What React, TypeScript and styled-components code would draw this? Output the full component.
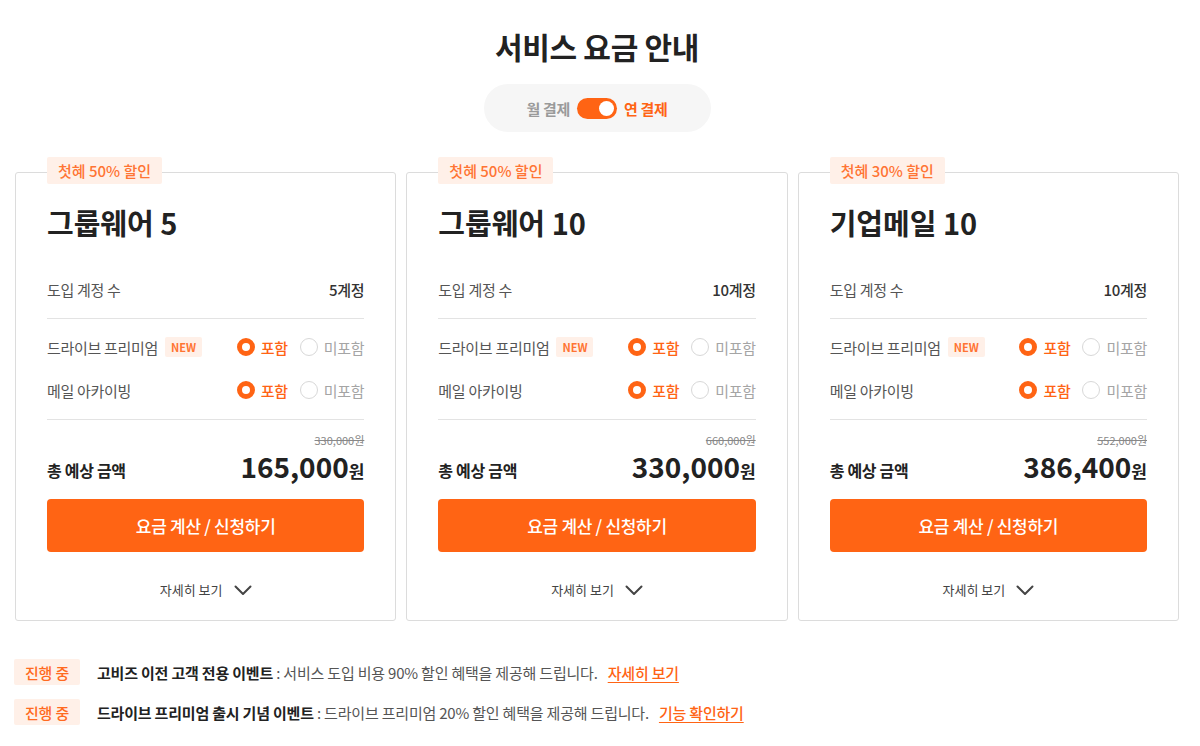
import React, { useState } from 'react';
import styled, { createGlobalStyle } from 'styled-components';

const ORANGE = '#ff6414';

const GlobalStyle = createGlobalStyle`
  html, body {
    margin: 0;
    padding: 0;
    background: #fff;
    font-family: "Noto Sans CJK KR", "Noto Sans", sans-serif;
    color: #222;
    letter-spacing: -0.3px;
  }
  * { box-sizing: border-box; }
`;

const Page = styled.div`
  width: 1200px;
  padding: 26px 21px 0 15px;
`;

const Heading = styled.h1`
  margin: 0;
  text-align: center;
  font-size: 30px;
  line-height: 40px;
  font-weight: 700;
  color: #222;
`;

const ToggleWrap = styled.div`
  display: flex;
  justify-content: center;
  margin-top: 18px;
`;

const TogglePill = styled.div`
  width: 227px;
  height: 48px;
  border-radius: 24px;
  background: #f6f6f6;
  display: flex;
  align-items: center;
  justify-content: center;
  gap: 7px;
`;

const ToggleLabel = styled.span<{ $active?: boolean }>`
  font-size: 15px;
  font-weight: 700;
  color: ${(p) => (p.$active ? ORANGE : '#9a9a9a')};
`;

const Switch = styled.button<{ $on: boolean }>`
  width: 40px;
  height: 21px;
  border: none;
  border-radius: 11px;
  background: ${(p) => (p.$on ? ORANGE : '#ccc')};
  padding: 0 3px;
  display: flex;
  align-items: center;
  justify-content: ${(p) => (p.$on ? 'flex-end' : 'flex-start')};
  cursor: pointer;
`;

const Knob = styled.span`
  width: 15px;
  height: 15px;
  border-radius: 50%;
  background: #fff;
`;

const CardGrid = styled.div`
  display: grid;
  grid-template-columns: repeat(3, 1fr);
  gap: 10px;
  margin-top: 40px;
`;

const Card = styled.div`
  position: relative;
  border: 1px solid #dcdcdc;
  border-radius: 3px;
  padding: 31px 31px 20px;
`;

const DiscountBadge = styled.span`
  position: absolute;
  top: -16px;
  left: 31px;
  height: 27px;
  padding: 0 11px;
  display: flex;
  align-items: center;
  background: #fff0e8;
  color: #ff7433;
  font-size: 15px;
  font-weight: 500;
  letter-spacing: 0;
  border-radius: 2px;
`;

const CardTitle = styled.h2`
  margin: 0;
  font-size: 29px;
  line-height: 36px;
  font-weight: 700;
  letter-spacing: 0;
  color: #222;
`;

const Row = styled.div`
  display: flex;
  align-items: center;
  justify-content: space-between;
  height: 20px;
  font-size: 15px;
`;

const CountRow = styled(Row)`
  margin-top: 39px;
`;

const Label = styled.span`
  color: #555;
  display: flex;
  align-items: center;
  gap: 7px;
`;

const Value = styled.span`
  color: #333;
  font-weight: 500;
`;

const Divider = styled.hr<{ $flush?: boolean }>`
  border: none;
  border-top: 1px solid #e3e3e3;
  margin: ${(p) => (p.$flush ? '0' : '19px 0 0')};
`;

const Options = styled.div`
  padding: 18px 0 19px;
  display: flex;
  flex-direction: column;
  gap: 23px;
`;

const NewTag = styled.span`
  background: #fff0e8;
  color: #ff7433;
  font-size: 11px;
  line-height: 14px;
  font-weight: 700;
  padding: 3px 6px;
  border-radius: 2px;
  letter-spacing: 0;
`;

const RadioGroup = styled.div`
  display: flex;
  align-items: center;
`;

const RadioItem = styled.label<{ $checked: boolean }>`
  display: flex;
  align-items: center;
  gap: 6px;
  color: ${(p) => (p.$checked ? ORANGE : '#a5a5a5')};
  font-weight: ${(p) => (p.$checked ? 500 : 400)};
  cursor: pointer;
  & + & {
    margin-left: 12px;
  }
`;

const RadioDot = styled.span<{ $checked: boolean }>`
  width: 18px;
  height: 18px;
  border-radius: 50%;
  border: ${(p) => (p.$checked ? `5px solid ${ORANGE}` : '1px solid #d8d8d8')};
  background: #fff;
`;

const PriceRow = styled.div`
  display: flex;
  justify-content: space-between;
  align-items: flex-end;
  padding-top: 14px;
`;

const TotalLabel = styled.span`
  font-size: 16px;
  line-height: 22px;
  font-weight: 700;
  color: #222;
  margin-bottom: 1px;
`;

const PriceBox = styled.div`
  display: flex;
  flex-direction: column;
  align-items: flex-end;
`;

const OldPrice = styled.span`
  font-size: 11px;
  line-height: 13px;
  height: 13px;
  color: #888;
  text-decoration: line-through;
  letter-spacing: 0;
`;

const Price = styled.span`
  display: flex;
  align-items: baseline;
  height: 32px;
  margin-top: 3px;
  font-size: 28px;
  line-height: 32px;
  font-weight: 700;
  color: #222;
  letter-spacing: 0;
  small {
    font-size: 17px;
    line-height: 1;
    font-weight: 700;
  }
`;

const ApplyButton = styled.button`
  width: 100%;
  height: 53px;
  margin-top: 17px;
  border: none;
  border-radius: 4px;
  background: ${ORANGE};
  color: #fff;
  font-family: inherit;
  font-size: 17px;
  font-weight: 500;
  letter-spacing: -0.3px;
  cursor: pointer;
`;

const MoreLink = styled.div`
  margin-top: 28px;
  display: flex;
  justify-content: center;
  align-items: center;
  gap: 11px;
  font-size: 13px;
  line-height: 20px;
  letter-spacing: 0;
  color: #444;
`;

const Events = styled.div`
  margin-top: 38px;
  display: flex;
  flex-direction: column;
  gap: 14px;
  margin-left: -1px;
`;

const EventRow = styled.div`
  display: flex;
  align-items: center;
  font-size: 15px;
  letter-spacing: -0.2px;
`;

const StatusBadge = styled.span`
  width: 66px;
  height: 26px;
  display: flex;
  align-items: center;
  justify-content: center;
  background: #fff0e8;
  color: #ff6a20;
  font-size: 15px;
  font-weight: 500;
  border-radius: 2px;
  margin-right: 17px;
`;

const EventName = styled.strong`
  font-weight: 700;
  color: #222;
`;

const EventDesc = styled.span`
  color: #555;
`;

const EventLink = styled.a`
  margin-left: 10px;
  color: ${ORANGE};
  font-weight: 500;
  text-decoration: underline;
  text-underline-offset: 3px;
  cursor: pointer;
`;

type Plan = {
  badge: string;
  name: string;
  seats: string;
  oldPrice: string;
  price: string;
};

const plans: Plan[] = [
  { badge: '첫혜 50% 할인', name: '그룹웨어 5', seats: '5계정', oldPrice: '330,000원', price: '165,000' },
  { badge: '첫혜 50% 할인', name: '그룹웨어 10', seats: '10계정', oldPrice: '660,000원', price: '330,000' },
  { badge: '첫혜 30% 할인', name: '기업메일 10', seats: '10계정', oldPrice: '552,000원', price: '386,400' },
];

function Chevron() {
  return (
    <svg width="18" height="11" viewBox="0 0 18 11" fill="none">
      <path d="M1.5 1.5L9 9l7.5-7.5" stroke="#444" strokeWidth="2" strokeLinecap="round" strokeLinejoin="round" />
    </svg>
  );
}

function Radio({ label, checked, onClick }: { label: string; checked: boolean; onClick: () => void }) {
  return (
    <RadioItem $checked={checked} onClick={onClick}>
      <RadioDot $checked={checked} />
      {label}
    </RadioItem>
  );
}

function OptionRow({ label, isNew }: { label: string; isNew?: boolean }) {
  const [included, setIncluded] = useState(true);
  return (
    <Row>
      <Label>
        {label}
        {isNew && <NewTag>NEW</NewTag>}
      </Label>
      <RadioGroup>
        <Radio label="포함" checked={included} onClick={() => setIncluded(true)} />
        <Radio label="미포함" checked={!included} onClick={() => setIncluded(false)} />
      </RadioGroup>
    </Row>
  );
}

function PlanCard({ plan }: { plan: Plan }) {
  return (
    <Card>
      <DiscountBadge>{plan.badge}</DiscountBadge>
      <CardTitle>{plan.name}</CardTitle>
      <CountRow>
        <Label>도입 계정 수</Label>
        <Value>{plan.seats}</Value>
      </CountRow>
      <Divider />
      <Options>
        <OptionRow label="드라이브 프리미엄" isNew />
        <OptionRow label="메일 아카이빙" />
      </Options>
      <Divider $flush />
      <PriceRow>
        <TotalLabel>총 예상 금액</TotalLabel>
        <PriceBox>
          <OldPrice>{plan.oldPrice}</OldPrice>
          <Price>
            {plan.price}
            <small>원</small>
          </Price>
        </PriceBox>
      </PriceRow>
      <ApplyButton>요금 계산 / 신청하기</ApplyButton>
      <MoreLink>
        자세히 보기
        <Chevron />
      </MoreLink>
    </Card>
  );
}

export default function App() {
  const [yearly, setYearly] = useState(true);
  return (
    <Page>
      <GlobalStyle />
      <Heading>서비스 요금 안내</Heading>
      <ToggleWrap>
        <TogglePill>
          <ToggleLabel $active={!yearly}>월 결제</ToggleLabel>
          <Switch $on={yearly} onClick={() => setYearly(!yearly)}>
            <Knob />
          </Switch>
          <ToggleLabel $active={yearly}>연 결제</ToggleLabel>
        </TogglePill>
      </ToggleWrap>
      <CardGrid>
        {plans.map((p) => (
          <PlanCard key={p.name} plan={p} />
        ))}
      </CardGrid>
      <Events>
        <EventRow>
          <StatusBadge>진행 중</StatusBadge>
          <EventName>고비즈 이전 고객 전용 이벤트</EventName>
          <EventDesc>&nbsp;: 서비스 도입 비용 90% 할인 혜택을 제공해 드립니다.</EventDesc>
          <EventLink>자세히 보기</EventLink>
        </EventRow>
        <EventRow>
          <StatusBadge>진행 중</StatusBadge>
          <EventName>드라이브 프리미엄 출시 기념 이벤트</EventName>
          <EventDesc>&nbsp;: 드라이브 프리미엄 20% 할인 혜택을 제공해 드립니다.</EventDesc>
          <EventLink>기능 확인하기</EventLink>
        </EventRow>
      </Events>
    </Page>
  );
}
